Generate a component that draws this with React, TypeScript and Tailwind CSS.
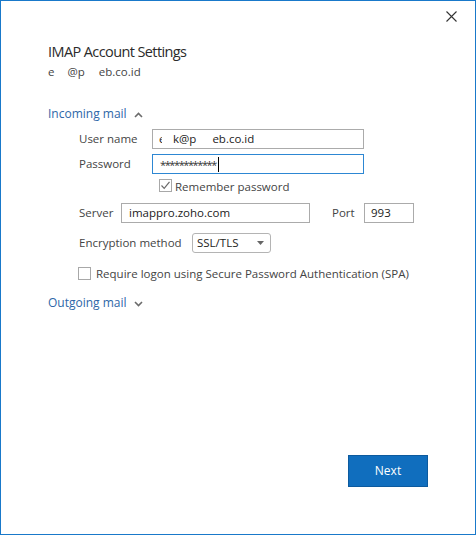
import { ReactNode } from 'react';

const font = { fontFamily: '"Open Sans", "Noto Sans", sans-serif' };

type CheckProps = {
  checked?: boolean;
  className?: string;
};

const CheckBox = ({ checked = false, className = '' }: CheckProps) => {
  return (
    <span
      className={`inline-flex items-center justify-center w-[13px] h-[13px] border border-[#a8a8a8] bg-white shrink-0 ${className}`}
    >
      {checked && (
        <svg width="11" height="11" viewBox="0 0 11 11">
          <path d="M1.5 5.5 L4.2 8.3 L9.5 1.8" fill="none" stroke="#6a6a6a" strokeWidth="1.2" />
        </svg>
      )}
    </span>
  );
};

const Label = ({ children, className = '' }: { children: ReactNode; className?: string }) => (
  <span className={`text-[11.5px] leading-[20px] text-[#444] ${className}`}>{children}</span>
);

const Chevron = ({ up = false }: { up?: boolean }) => (
  <svg width="9" height="6" viewBox="0 0 9 6" className="ml-[7px] mt-[1px]">
    <path
      d={up ? 'M1 5 L4.5 1.5 L8 5' : 'M1 1 L4.5 4.5 L8 1'}
      fill="none"
      stroke="#6b6b6b"
      strokeWidth="1.6"
    />
  </svg>
);

export default function App() {
  return (
    <div
      className="relative w-[476px] h-[535px] border border-[#1979ca] bg-white flex flex-col"
      style={font}
    >
      {/* close */}
      <button className="absolute top-[10px] right-[18px] w-[11px] h-[11px]" aria-label="close">
        <svg width="11" height="11" viewBox="0 0 11 11">
          <path d="M0.5 0.5 L10.5 10.5 M10.5 0.5 L0.5 10.5" stroke="#333" strokeWidth="1.1" />
        </svg>
      </button>

      <div className="pl-[47px] pt-[39px] flex flex-col">
        <h1 className="text-[14.5px] leading-[24px] tracking-[-0.6px] text-[#2b2b2b]">IMAP Account Settings</h1>
        <div className="flex text-[11.5px] leading-[16px] text-[#444]">
          <span>e</span>
          <span className="ml-[13px]">@p</span>
          <span className="ml-[14px]">eb.co.id</span>
        </div>

        <div className="mt-[25px] flex items-center h-[18px]">
          <span className="text-[12px] text-[#2e67a8]">Incoming mail</span>
          <Chevron up />
        </div>

        <div className="pl-[31px] flex flex-col">
          <div className="mt-[6px] flex items-center">
            <Label className="w-[73px]">User name</Label>
            <div className="w-[212px] h-[20px] border border-[#ababab] flex items-center pl-[6px] text-[11.5px] text-[#222]">
              <span className="w-[3px] overflow-hidden">e</span>
              <span className="ml-[11px]">k@p</span>
              <span className="ml-[16px]">eb.co.id</span>
            </div>
          </div>

          <div className="mt-[5px] flex items-center">
            <Label className="w-[73px]">Password</Label>
            <div className="w-[212px] h-[20px] border border-[#2d87d3] flex items-center pl-[7px] text-[11px] text-[#333]">
              <span className="tracking-[-1.4px] leading-[20px] pt-[1px]">************</span>
              <span className="inline-block w-px h-[15px] bg-black ml-[2px]" />
            </div>
          </div>

          <div className="mt-[5px] flex items-center pl-[80px] h-[13px]">
            <CheckBox checked />
            <Label className="ml-[3px] mt-[2px]">Remember password</Label>
          </div>

          <div className="mt-[11px] flex items-center">
            <Label className="w-[42px]">Server</Label>
            <div className="w-[189px] h-[20px] border border-[#ababab] flex items-center pl-[7px] text-[11.5px] text-[#222]">
              imappro.zoho.com
            </div>
            <Label className="ml-[22px] w-[32px]">Port</Label>
            <div className="w-[50px] h-[20px] border border-[#ababab] flex items-center pl-[6px] text-[11.5px] text-[#222]">
              993
            </div>
          </div>

          <div className="mt-[10px] flex items-center">
            <Label className="w-[113px]">Encryption method</Label>
            <div className="w-[79px] h-[20px] border border-[#b4b4b4] rounded-[3px] flex items-center justify-between pl-[4px] pr-[6px] text-[11.5px] text-[#222]">
              <span>SSL/TLS</span>
              <svg width="7" height="4" viewBox="0 0 7 4">
                <path d="M0 0 L7 0 L3.5 4 Z" fill="#666" />
              </svg>
            </div>
          </div>

          <div className="mt-[14px] flex items-center h-[13px] -ml-[1px]">
            <CheckBox />
            <Label className="ml-[5px]">Require logon using Secure Password Authentication (SPA)</Label>
          </div>
        </div>

        <div className="mt-[14px] flex items-center h-[18px]">
          <span className="text-[12px] text-[#2e67a8]">Outgoing mail</span>
          <Chevron />
        </div>
      </div>

      <div className="mt-auto flex justify-end pr-[47px] pb-[47px]">
        <button className="w-[80px] h-[32px] bg-[#106ebe] border border-[#0c5a9e] text-white text-[12px]">
          Next
        </button>
      </div>
    </div>
  );
}
